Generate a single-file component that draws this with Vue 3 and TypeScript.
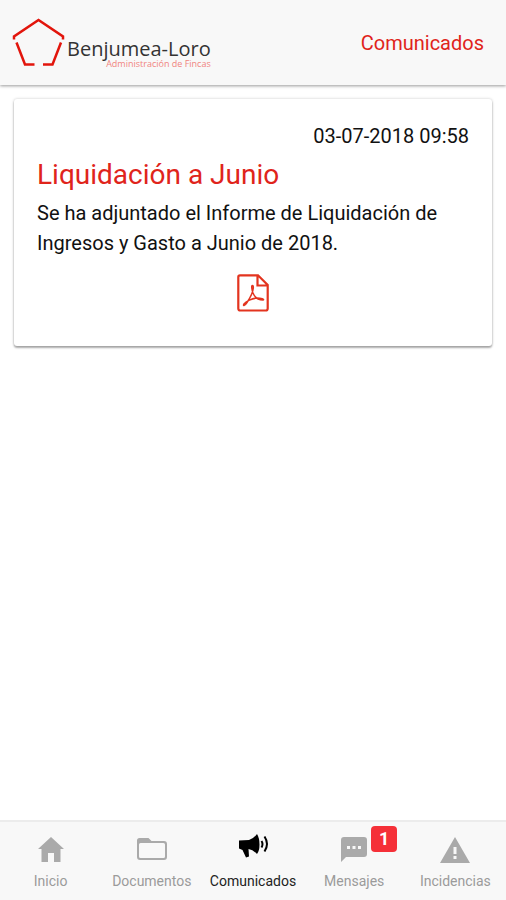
<script setup lang="ts">
import { ref } from 'vue'

interface Tab {
  id: string
  label: string
  badge?: number
}

const tabs: Tab[] = [
  { id: 'inicio', label: 'Inicio' },
  { id: 'documentos', label: 'Documentos' },
  { id: 'comunicados', label: 'Comunicados' },
  { id: 'mensajes', label: 'Mensajes', badge: 1 },
  { id: 'incidencias', label: 'Incidencias' },
]

const active = ref('comunicados')
</script>

<template>
  <div class="page">
    <header class="toolbar">
      <div class="brand">
        <svg class="brand-mark" viewBox="0 0 54 52" aria-hidden="true">
          <path d="M3 22.500V19.500L27.500 3L52 19.500V22.500M5.500 25.500L14 47.500H23.500M50 25.500L41.500 47.500H32" />
        </svg>
        <div class="brand-text">
          <span class="brand-name">Benjumea-Loro</span>
          <span class="brand-sub">Administración de Fincas</span>
        </div>
      </div>
      <h1 class="section">Comunicados</h1>
    </header>

    <main class="content">
      <article class="card">
        <time class="date" datetime="2018-07-03T09:58">03-07-2018 09:58</time>
        <h2 class="title">Liquidación a Junio</h2>
        <p class="body">Se ha adjuntado el Informe de Liquidación de Ingresos y Gasto a Junio de 2018.</p>
        <button class="attachment" type="button" aria-label="PDF">
          <svg viewBox="0 0 32 38" aria-hidden="true">
            <path class="sheet" d="M3 1.300H21L30.700 11V34.500Q30.700 36.500 28.700 36.500H3.300Q1.300 36.500 1.300 34.500V3Q1.300 1.300 3 1.300ZM20.500 1.500V11.500H30.500" />
            <path class="mark" d="M15.500 11.500C14 11.500 15 16 16 19C18 24 22 26 26 26C28 25.500 24 24 20 24C15 24.500 9 27 7 30C5.500 32.500 8 31.500 10 28.500C13 24 16 18 16.300 14C16.400 12 16 11.500 15.500 11.500Z" />
          </svg>
        </button>
      </article>
    </main>

    <nav class="tabs">
      <button
        v-for="tab in tabs"
        :key="tab.id"
        type="button"
        class="tab"
        :class="{ active: active === tab.id }"
        @click="active = tab.id"
      >
        <span class="icon">
          <svg v-if="tab.id === 'inicio'" viewBox="0 0 32 32" aria-hidden="true">
            <path d="M16 4L3 16H6.500V29H13V20H19V29H25.500V16H29Z" />
          </svg>
          <svg v-else-if="tab.id === 'documentos'" viewBox="0 0 32 32" aria-hidden="true">
            <path fill-rule="evenodd" d="M3.500 5H12.500L15.500 8H28Q31 8 31 11V24Q31 27 28 27H4Q1 27 1 24V7.500Q1 5 3.500 5ZM4.500 10Q3 10 3 11.500V23.500Q3 25 4.500 25H27.500Q29 25 29 23.500V11.500Q29 10 27.500 10Z" />
          </svg>
          <svg v-else-if="tab.id === 'comunicados'" viewBox="0 0 32 32" aria-hidden="true">
            <path d="M2 7.500L12 7Q17 5.500 20 1Q22.500 5 22.500 11.500T20 21Q16 16.500 11.500 16L12 23.500L9 24.500L5.500 17L2 15.500Z" />
            <path class="wave" d="M24.500 8Q26.500 11 24.500 14.500M27.500 3.500Q32.500 11 27.500 18.500" />
          </svg>
          <svg v-else-if="tab.id === 'mensajes'" viewBox="0 0 32 32" aria-hidden="true">
            <path fill-rule="evenodd" d="M6 4H26Q29 4 29 7V21Q29 24 26 24H8L3 29V7Q3 4 6 4ZM9 13V16H12V13ZM14.500 13V16H17.500V13ZM20 13V16H23V13Z" />
          </svg>
          <svg v-else viewBox="0 0 32 32" aria-hidden="true">
            <path fill-rule="evenodd" d="M16 4L31 30H1ZM14.500 14V21H17.500V14ZM14.500 23V26H17.500V23Z" />
          </svg>
          <span v-if="tab.badge" class="badge">{{ tab.badge }}</span>
        </span>
        <span class="label">{{ tab.label }}</span>
      </button>
    </nav>
  </div>
</template>

<style>
body {
  margin: 0;
  background: #fff;
}
</style>

<style scoped>
.page {
  display: flex;
  flex-direction: column;
  min-height: 100vh;
  font-family: Roboto, "Liberation Sans", sans-serif;
  color: #111;
}

.toolbar {
  display: flex;
  align-items: center;
  justify-content: space-between;
  box-sizing: border-box;
  height: 85px;
  padding: 0 22px 0 11px;
  background: #f8f8f8;
  box-shadow: 0 1px 3px rgba(0, 0, 0, 0.4);
}

.brand {
  display: flex;
  align-items: center;
  gap: 2px;
}

.brand-mark {
  width: 54px;
  height: 52px;
  fill: none;
  stroke: #e2150c;
  stroke-width: 2.5;
}

.brand-text {
  display: flex;
  flex-direction: column;
  align-items: flex-end;
  padding-top: 20px;
  font-family: "Open Sans", "Noto Sans", sans-serif;
}

.brand-name {
  font-size: 20px;
  line-height: 22px;
  color: #333;
}

.brand-sub {
  font-size: 9px;
  line-height: 8px;
  color: #f08480;
}

.section {
  margin: 0;
  font-size: 20px;
  font-weight: 400;
  line-height: 24px;
  color: #e0241b;
}

.content {
  flex: 1;
  padding: 14px;
}

.card {
  display: flex;
  flex-direction: column;
  padding: 22px 23px 32px;
  border-radius: 3px;
  background: #fff;
  box-shadow: 0 2px 2px rgba(0, 0, 0, 0.3), 0 0 3px rgba(0, 0, 0, 0.22);
}

.date {
  align-self: flex-end;
  font-size: 20px;
  line-height: 30px;
}

.title {
  margin: 5px 0 4px;
  font-size: 28px;
  font-weight: 400;
  line-height: 38px;
  color: #e0241b;
}

.body {
  margin: 0;
  font-size: 20px;
  line-height: 30px;
}

.attachment {
  align-self: center;
  margin: 16px 0 2px;
  padding: 0;
  border: 0;
  background: none;
  cursor: pointer;
}

.attachment svg {
  display: block;
  width: 32px;
  height: 38px;
  fill: none;
  stroke: #e3341f;
}

.sheet {
  stroke-width: 2.2;
}

.mark {
  stroke-width: 1.5;
}

.tabs {
  display: grid;
  grid-template-columns: repeat(5, 1fr);
  border-top: 2px solid #ececec;
  background: #f8f8f8;
}

.tab {
  display: flex;
  flex-direction: column;
  align-items: center;
  gap: 7px;
  min-width: 0;
  padding: 11px 0 10px;
  border: 0;
  background: none;
  font-family: inherit;
  color: #9b9b9b;
  cursor: pointer;
}

.icon {
  position: relative;
  width: 32px;
  height: 32px;
}

.icon svg {
  display: block;
  width: 32px;
  height: 32px;
  fill: #aaa;
}

.label {
  font-size: 14px;
  line-height: 18px;
}

.active {
  color: #222;
}

.active .icon svg {
  fill: #000;
}

.active .icon .wave {
  fill: none;
  stroke: #000;
  stroke-width: 2;
}

.badge {
  position: absolute;
  top: -7px;
  left: 33px;
  width: 26px;
  border-radius: 4px;
  background: #f53038;
  font-size: 18px;
  font-weight: 700;
  line-height: 26px;
  text-align: center;
  color: #fff;
}
</style>
